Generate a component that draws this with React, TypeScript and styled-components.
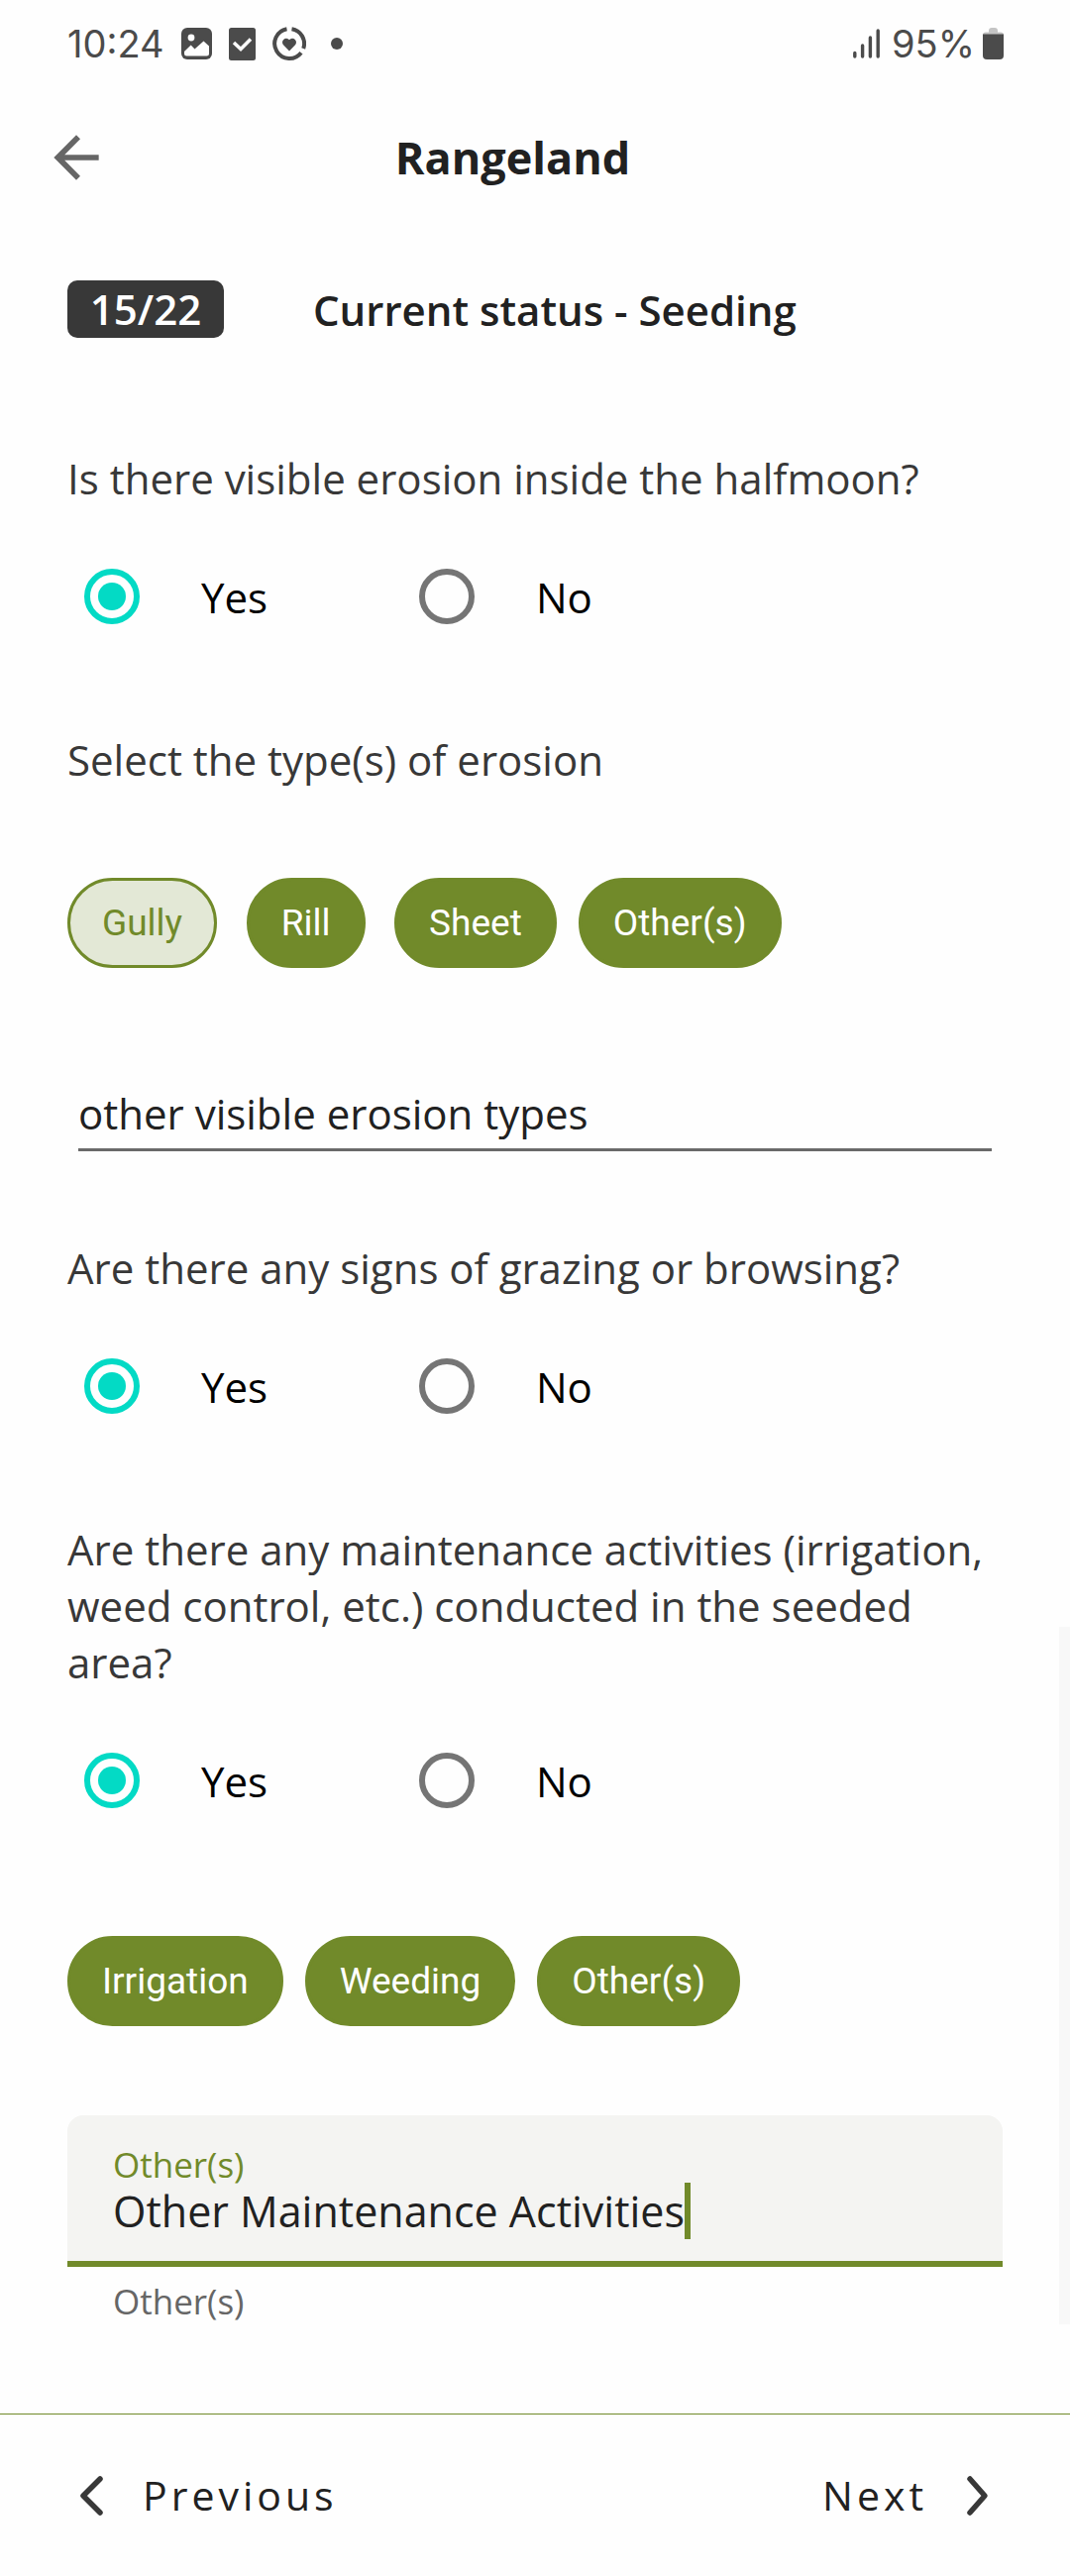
import React, { useState } from "react";
import styled, { createGlobalStyle } from "styled-components";

const olive = "#718a2a";
const ink = "#212121";
const sans = '"Open Sans", "Noto Sans", sans-serif';

const GlobalStyle = createGlobalStyle`
  *, *::before, *::after { box-sizing: border-box; }
  body { margin: 0; background: #fefefe; font-family: ${sans}; color: ${ink}; }
  button, input { font: inherit; color: inherit; letter-spacing: inherit; }
`;

const Screen = styled.div`
  min-height: 100vh;
  display: flex;
  flex-direction: column;
  font-size: 42px;
  line-height: 57px;
`;

const StatusBar = styled.div`
  height: 88px;
  padding: 0 67px 0 68px;
  display: flex;
  align-items: center;
  justify-content: space-between;
  color: #4b4b4b;
  font-family: Inter, Roboto, sans-serif;
  font-size: 38px;
  font-weight: 400;
  line-height: 48px;
`;

const StatusGroup = styled.div<{ $gap: number }>`
  display: flex;
  align-items: center;
  gap: ${(p) => p.$gap}px;
`;

const Dot = styled.span`
  width: 12px;
  height: 12px;
  margin-left: 8px;
  border-radius: 50%;
  background: currentColor;
`;

const AppBar = styled.header`
  height: 142px;
  padding: 0 156px 0 43px;
  display: flex;
  align-items: center;
`;

const IconButton = styled.button`
  width: 68px;
  height: 68px;
  padding: 0;
  border: 0;
  background: none;
  color: #666;
  display: grid;
  place-items: center;
`;

const Title = styled.h1`
  flex: 1;
  margin: 0;
  text-align: center;
  font-size: 45px;
  font-weight: 700;
  line-height: 60px;
`;

const ScrollArea = styled.main`
  flex: 1;
  position: relative;
  padding: 53px 68px 0;
`;

const ScrollThumb = styled.div`
  position: absolute;
  right: 0;
  bottom: 0;
  width: 11px;
  height: 704px;
  background: #f8f8f8;
`;

const SectionHead = styled.div`
  display: flex;
  align-items: center;
  gap: 90px;
  margin-bottom: 113px;
`;

const Badge = styled.span`
  min-width: 158px;
  padding: 0 20px;
  height: 58px;
  border-radius: 10px;
  background: #383838;
  color: #fff;
  font-weight: 600;
  text-align: center;
`;

const SectionTitle = styled.h2`
  margin: 0;
  font-size: 42px;
  font-weight: 600;
`;

const Group = styled.fieldset`
  margin: 0 0 91px;
  padding: 0;
  border: 0;
  min-width: 0;
`;

const Question = styled.legend`
  padding: 0;
  margin: 0 0 46px;
  color: #383838;
`;

const ChipQuestion = styled(Question)`
  margin-bottom: 91px;
`;

const Options = styled.div`
  display: flex;
  height: 90px;
`;

const Option = styled.label`
  width: 338px;
  padding-left: 17px;
  display: flex;
  align-items: center;
  gap: 62px;
  color: #000;
`;

const Radio = styled.input`
  appearance: none;
  flex: none;
  width: 56px;
  height: 56px;
  margin: 0;
  border: 6px solid #757575;
  border-radius: 50%;
  display: grid;
  place-items: center;

  &:checked {
    border-color: #03dac5;
  }
  &:checked::before {
    content: "";
    width: 28px;
    height: 28px;
    border-radius: 50%;
    background: #03dac5;
  }
`;

const ChipRow = styled.div`
  display: flex;
  flex-wrap: wrap;
  gap: 22px;
`;

const ChipTarget = styled.div`
  min-width: 135px;
  display: flex;
  justify-content: center;
`;

const Chip = styled.button`
  height: 91px;
  padding: 0 32px;
  border: 3px solid ${olive};
  border-radius: 46px;
  background: ${olive};
  color: #fff;
  font-family: Roboto, sans-serif;
  font-size: 37px;
  line-height: 48px;

  &[aria-pressed="true"] {
    background: #e3e8d6;
    color: ${olive};
  }
`;

const PlainField = styled.div`
  padding: 27px 11px 0;
  margin-bottom: 89px;
`;

const PlainInput = styled.input`
  display: block;
  width: 100%;
  height: 67px;
  padding: 0 0 7px;
  border: 0;
  border-bottom: 3px solid #6a6a6a;
  background: none;
  outline: none;
`;

const MaintenanceChips = styled(ChipRow)`
  margin: 112px 0 90px;
`;

const FilledField = styled.div`
  height: 153px;
  padding: 32px 46px 0;
  border-radius: 16px 16px 0 0;
  border-bottom: 6px solid ${olive};
  background: #f4f4f2;
`;

const FieldLabel = styled.label`
  display: block;
  color: ${olive};
  font-size: 35px;
  line-height: 36px;
`;

const FieldLine = styled.div`
  display: flex;
`;

const FieldInput = styled.input`
  field-sizing: content;
  max-width: 100%;
  height: 57px;
  padding: 0;
  border: 0;
  background: none;
  outline: none;
  font-size: 43px;
`;

const Caret = styled.span`
  width: 6px;
  height: 57px;
  background: ${olive};
`;

const Helper = styled.p`
  margin: 0;
  padding: 11px 46px 0;
  color: #666;
  font-size: 35px;
  line-height: 47px;
`;

const Footer = styled.footer`
  height: 164px;
  margin-top: 90px;
  padding: 0 76px;
  border-top: 1px solid ${olive};
  display: flex;
  align-items: center;
  justify-content: space-between;
`;

const NavButton = styled.button`
  padding: 0;
  border: 0;
  background: none;
  display: flex;
  align-items: center;
  gap: 36px;
  font-size: 41px;
  letter-spacing: 4px;
`;

const PhotoIcon = () => (
  <svg width="31" height="32" viewBox="0 0 31 32" aria-hidden="true">
    <rect width="31" height="32" rx="6" fill="currentColor" />
    <circle cx="10" cy="10" r="3.4" fill="#fefefe" />
    <path d="M3 24 9.700 17.500 13.500 21.500 22.500 13.500 28 18.500V26Q28 28.500 25.500 28.500H5.500Q3 28.500 3 26Z" fill="#fefefe" />
  </svg>
);

const TaskIcon = () => (
  <svg width="27" height="33" viewBox="0 0 27 33" aria-hidden="true">
    <rect width="27" height="33" rx="2.500" fill="currentColor" />
    <path d="m5 15 7 6.500L22 11.500" fill="none" stroke="#fefefe" strokeWidth="3.500" />
  </svg>
);

const HealthIcon = () => (
  <svg width="34" height="34" viewBox="0 0 34 34" fill="none" aria-hidden="true">
    <path d="M14.500 2.200A15 15 0 1 0 29 26.200M19.500 2.200A15 15 0 0 1 31.200 22" stroke="currentColor" strokeWidth="4" />
    <path d="M17 24.500 11.200 18.600a4 4 0 0 1 0-5.700 4 4 0 0 1 5.800.3 4 4 0 0 1 5.800-.3 4 4 0 0 1 0 5.700Z" fill="currentColor" />
  </svg>
);

const SignalIcon = () => (
  <svg width="27" height="30" viewBox="0 0 27 30" aria-hidden="true" stroke="currentColor" strokeWidth="3.400" strokeLinecap="round">
    <path d="M1.800 24.500v3.500M9.600 17v11M17.400 9v19M25.200 2v26" />
  </svg>
);

const BatteryIcon = () => (
  <svg width="21" height="32" viewBox="0 0 21 32" aria-hidden="true">
    <path d="M6 3q0-3 3-3h3q3 0 3 3v1.500h3q3 0 3 3V9H0V7.500q0-3 3-3h3Z" fill="#c4c4c4" />
    <path d="M0 6.500h21V28q0 4-4 4H4q-4 0-4-4Z" fill="currentColor" />
  </svg>
);

const BackIcon = () => (
  <svg width="68" height="68" viewBox="0 0 24 24" fill="currentColor" aria-hidden="true">
    <path d="M20 11H7.830l5.590-5.590L12 4l-8 8 8 8 1.410-1.410L7.830 13H20v-2z" />
  </svg>
);

const Chevron = ({ next }: { next?: boolean }) => (
  <svg width="32" height="44" viewBox="0 0 32 44" fill="none" stroke="#383838" strokeWidth="5.500" strokeLinecap="round" strokeLinejoin="round" aria-hidden="true">
    <path d={next ? "M7 5 22 22 7 39" : "M25 5 8 22 25 39"} />
  </svg>
);

function YesNo({ name, question }: { name: string; question: string }) {
  const [value, setValue] = useState("Yes");
  return (
    <Group>
      <Question>{question}</Question>
      <Options>
        {["Yes", "No"].map((option) => (
          <Option key={option}>
            <Radio
              type="radio"
              name={name}
              checked={value === option}
              onChange={() => setValue(option)}
            />
            {option}
          </Option>
        ))}
      </Options>
    </Group>
  );
}

function Chips({ labels, initial = [] }: { labels: string[]; initial?: string[] }) {
  const [picked, setPicked] = useState<string[]>(initial);
  const toggle = (label: string) =>
    setPicked((now) => (now.includes(label) ? now.filter((l) => l !== label) : [...now, label]));
  return (
    <>
      {labels.map((label) => (
        <ChipTarget key={label}>
          <Chip type="button" aria-pressed={picked.includes(label)} onClick={() => toggle(label)}>
            {label}
          </Chip>
        </ChipTarget>
      ))}
    </>
  );
}

export default function App() {
  const [erosion, setErosion] = useState("other visible erosion types");
  const [activity, setActivity] = useState("Other Maintenance Activities");

  return (
    <Screen>
      <GlobalStyle />
      <StatusBar>
        <StatusGroup $gap={17}>
          <span>10:24</span>
          <PhotoIcon />
          <TaskIcon />
          <HealthIcon />
          <Dot />
        </StatusGroup>
        <StatusGroup $gap={12}>
          <SignalIcon />
          <StatusGroup $gap={8}>
            <span>95%</span>
            <BatteryIcon />
          </StatusGroup>
        </StatusGroup>
      </StatusBar>
      <AppBar>
        <IconButton type="button" aria-label="Back">
          <BackIcon />
        </IconButton>
        <Title>Rangeland</Title>
      </AppBar>
      <ScrollArea>
        <SectionHead>
          <Badge>15/22</Badge>
          <SectionTitle>Current status - Seeding</SectionTitle>
        </SectionHead>
        <YesNo name="erosion" question="Is there visible erosion inside the halfmoon?" />
        <Group>
          <ChipQuestion>Select the type(s) of erosion</ChipQuestion>
          <ChipRow>
            <Chips labels={["Gully", "Rill", "Sheet", "Other(s)"]} initial={["Gully"]} />
          </ChipRow>
        </Group>
        <PlainField>
          <PlainInput
            aria-label="Other erosion types"
            value={erosion}
            onChange={(e) => setErosion(e.target.value)}
          />
        </PlainField>
        <YesNo name="grazing" question="Are there any signs of grazing or browsing?" />
        <YesNo
          name="maintenance"
          question="Are there any maintenance activities (irrigation, weed control, etc.) conducted in the seeded area?"
        />
        <MaintenanceChips>
          <Chips labels={["Irrigation", "Weeding", "Other(s)"]} />
        </MaintenanceChips>
        <FilledField>
          <FieldLabel htmlFor="activity">Other(s)</FieldLabel>
          <FieldLine>
            <FieldInput
              id="activity"
              aria-describedby="activity-help"
              value={activity}
              onChange={(e) => setActivity(e.target.value)}
            />
            <Caret />
          </FieldLine>
        </FilledField>
        <Helper id="activity-help">Other(s)</Helper>
        <ScrollThumb />
      </ScrollArea>
      <Footer>
        <NavButton type="button">
          <Chevron />
          Previous
        </NavButton>
        <NavButton type="button">
          Next
          <Chevron next />
        </NavButton>
      </Footer>
    </Screen>
  );
}
